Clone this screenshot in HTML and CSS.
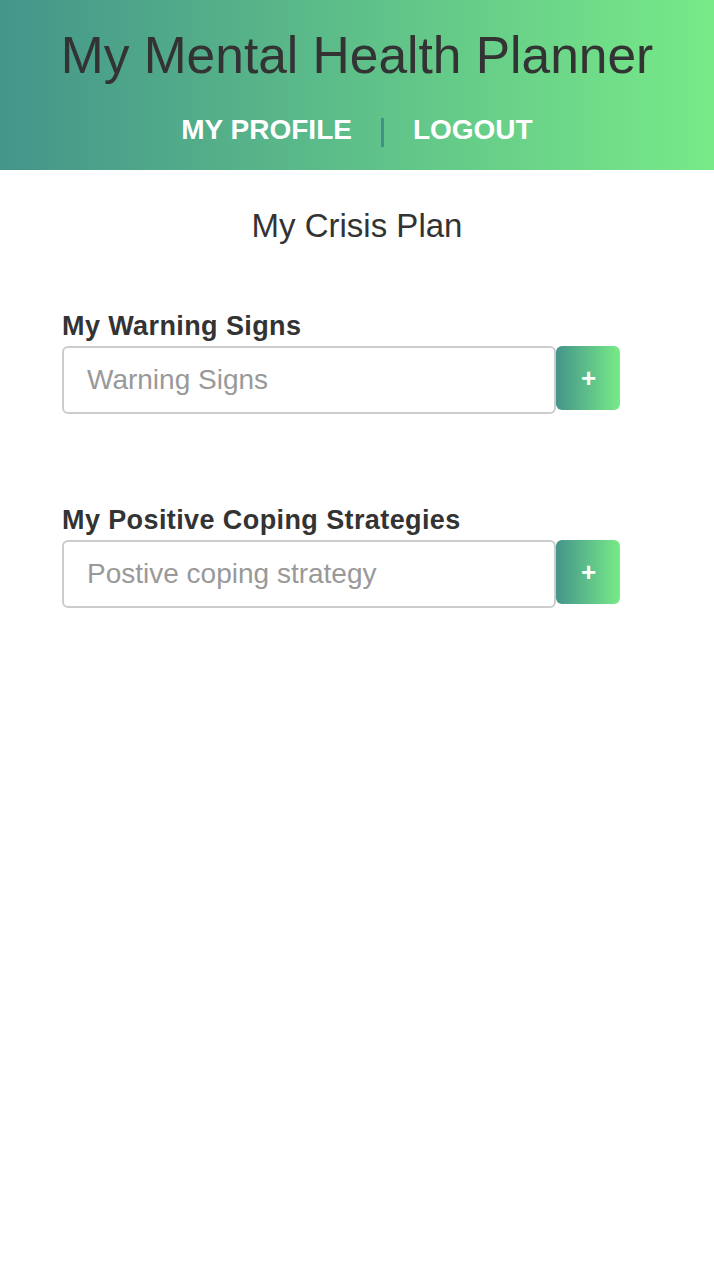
FILE: index.html
```html
<!DOCTYPE html>
<html>
<head>
<meta charset="utf-8">
<link rel="stylesheet" href="styles.css">
</head>
<body>
<header class="header">
  <h1 class="title">My Mental Health Planner</h1>
  <nav class="nav">
    <a class="nav-link" href="#">MY PROFILE</a>
    <span class="nav-sep"></span>
    <a class="nav-link" href="#">LOGOUT</a>
  </nav>
</header>
<main class="main">
  <h2 class="page-title">My Crisis Plan</h2>
  <section class="section">
    <label class="label">My Warning Signs</label>
    <div class="row">
      <input class="input" type="text" placeholder="Warning Signs">
      <button class="add-btn">+</button>
    </div>
  </section>
  <section class="section">
    <label class="label">My Positive Coping Strategies</label>
    <div class="row">
      <input class="input" type="text" placeholder="Postive coping strategy">
      <button class="add-btn">+</button>
    </div>
  </section>
</main>
</body>
</html>
```

FILE: styles.css
```css
* { box-sizing: border-box; }
body {
  margin: 0;
  font-family: "Liberation Sans", Arial, sans-serif;
  color: #333;
  background: #fff;
}
.header {
  height: 170px;
  background: linear-gradient(to right, #44958a, #78ea88);
  display: flex;
  flex-direction: column;
  align-items: center;
  padding-top: 26px;
}
.title {
  margin: 0;
  font-size: 51.5px;
  font-weight: normal;
  line-height: 58px;
  color: #333;
}
.nav {
  margin-top: 30px;
  height: 32px;
  display: flex;
  align-items: center;
  gap: 29px;
}
.nav-link {
  color: #fff;
  text-decoration: none;
  font-weight: bold;
  font-size: 28px;
  line-height: 32px;
}
.nav-sep {
  width: 3px;
  height: 29px;
  background: #41908a;
  margin-top: 4px;
}
.main {
  padding: 0 62px;
}
.page-title {
  margin: 0;
  padding-top: 38px;
  text-align: center;
  font-size: 33px;
  font-weight: normal;
  line-height: 36px;
}
.section {
  margin-top: 67px;
}
.section + .section {
  margin-top: 91px;
}
.label {
  display: block;
  font-weight: bold;
  font-size: 27px;
  letter-spacing: 0.4px;
  line-height: 30px;
  margin-bottom: 5px;
}
.row {
  display: flex;
  align-items: flex-start;
}
.input {
  width: 494px;
  height: 68px;
  border: 2px solid #ccc;
  border-radius: 6px;
  padding: 0 23px;
  font-family: "Liberation Sans", Arial, sans-serif;
  font-size: 28px;
  color: #333;
  outline: none;
}
.input::placeholder { color: #999; }
.add-btn {
  width: 64px;
  height: 64px;
  border: none;
  border-radius: 6px;
  background: linear-gradient(to right, #44958a, #78ea88);
  color: #fff;
  font-weight: bold;
  font-size: 26px;
  font-family: "Liberation Sans", Arial, sans-serif;
  padding: 0 0 0 1px;
}
```
